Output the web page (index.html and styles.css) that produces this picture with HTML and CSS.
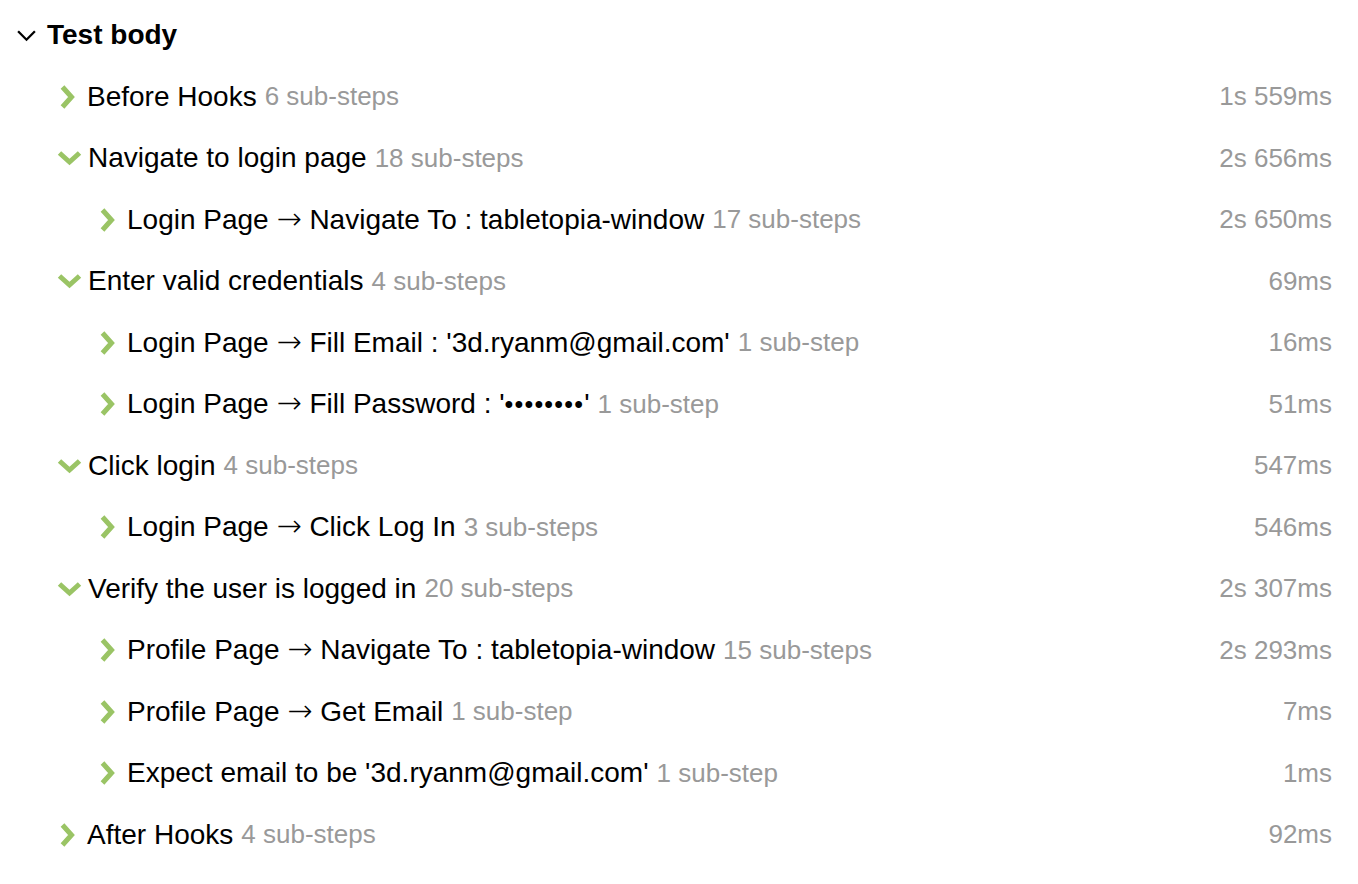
FILE: index.html
```html
<!DOCTYPE html>
<html>
<head>
<meta charset="utf-8">
<link rel="stylesheet" href="styles.css">
</head>
<body>
<div class="tree">
  <div class="header">
    <svg class="hchev" viewBox="0 0 20 12"><path d="M2 2 L10 10 L18 2" fill="none" stroke="#000" stroke-width="2.2"/></svg>
    <span class="htitle">Test body</span>
  </div>
  <div class="row l1"><svg class="cr" viewBox="0 0 16 24"><path d="M3 2 L12 12 L3 22" fill="none" stroke="#9ac465" stroke-width="5"/></svg><span class="name">Before Hooks</span><span class="sub">6 sub-steps</span><span class="dur">1s 559ms</span></div>
  <div class="row l1"><svg class="cd" viewBox="0 0 24 16"><path d="M2 3 L12 12 L22 3" fill="none" stroke="#9ac465" stroke-width="5"/></svg><span class="name">Navigate to login page</span><span class="sub">18 sub-steps</span><span class="dur">2s 656ms</span></div>
  <div class="row l2"><svg class="cr" viewBox="0 0 16 24"><path d="M3 2 L12 12 L3 22" fill="none" stroke="#9ac465" stroke-width="5"/></svg><span class="name">Login Page <span class="arr">→</span> Navigate To : tabletopia-window</span><span class="sub">17 sub-steps</span><span class="dur">2s 650ms</span></div>
  <div class="row l1"><svg class="cd" viewBox="0 0 24 16"><path d="M2 3 L12 12 L22 3" fill="none" stroke="#9ac465" stroke-width="5"/></svg><span class="name">Enter valid credentials</span><span class="sub">4 sub-steps</span><span class="dur">69ms</span></div>
  <div class="row l2"><svg class="cr" viewBox="0 0 16 24"><path d="M3 2 L12 12 L3 22" fill="none" stroke="#9ac465" stroke-width="5"/></svg><span class="name">Login Page <span class="arr">→</span> Fill Email : '3d.ryanm@gmail.com'</span><span class="sub">1 sub-step</span><span class="dur">16ms</span></div>
  <div class="row l2"><svg class="cr" viewBox="0 0 16 24"><path d="M3 2 L12 12 L3 22" fill="none" stroke="#9ac465" stroke-width="5"/></svg><span class="name">Login Page <span class="arr">→</span> Fill Password : '<span class="dots">••••••••</span>'</span><span class="sub">1 sub-step</span><span class="dur">51ms</span></div>
  <div class="row l1"><svg class="cd" viewBox="0 0 24 16"><path d="M2 3 L12 12 L22 3" fill="none" stroke="#9ac465" stroke-width="5"/></svg><span class="name">Click login</span><span class="sub">4 sub-steps</span><span class="dur">547ms</span></div>
  <div class="row l2"><svg class="cr" viewBox="0 0 16 24"><path d="M3 2 L12 12 L3 22" fill="none" stroke="#9ac465" stroke-width="5"/></svg><span class="name">Login Page <span class="arr">→</span> Click Log In</span><span class="sub">3 sub-steps</span><span class="dur">546ms</span></div>
  <div class="row l1"><svg class="cd" viewBox="0 0 24 16"><path d="M2 3 L12 12 L22 3" fill="none" stroke="#9ac465" stroke-width="5"/></svg><span class="name">Verify the user is logged in</span><span class="sub">20 sub-steps</span><span class="dur">2s 307ms</span></div>
  <div class="row l2"><svg class="cr" viewBox="0 0 16 24"><path d="M3 2 L12 12 L3 22" fill="none" stroke="#9ac465" stroke-width="5"/></svg><span class="name">Profile Page <span class="arr">→</span> Navigate To : tabletopia-window</span><span class="sub">15 sub-steps</span><span class="dur">2s 293ms</span></div>
  <div class="row l2"><svg class="cr" viewBox="0 0 16 24"><path d="M3 2 L12 12 L3 22" fill="none" stroke="#9ac465" stroke-width="5"/></svg><span class="name">Profile Page <span class="arr">→</span> Get Email</span><span class="sub">1 sub-step</span><span class="dur">7ms</span></div>
  <div class="row l2"><svg class="cr" viewBox="0 0 16 24"><path d="M3 2 L12 12 L3 22" fill="none" stroke="#9ac465" stroke-width="5"/></svg><span class="name">Expect email to be '3d.ryanm@gmail.com'</span><span class="sub">1 sub-step</span><span class="dur">1ms</span></div>
  <div class="row l1"><svg class="cr" viewBox="0 0 16 24"><path d="M3 2 L12 12 L3 22" fill="none" stroke="#9ac465" stroke-width="5"/></svg><span class="name">After Hooks</span><span class="sub">4 sub-steps</span><span class="dur">92ms</span></div>
</div>
</body>
</html>
```
FILE: styles.css
```css
html, body {
  margin: 0;
  padding: 0;
  background: #fff;
}
body {
  font-family: "Liberation Sans", Arial, sans-serif;
  font-size: 28px;
  color: #000;
}
.tree {
  padding: 4px 26px 0 16px;
}
.header {
  display: flex;
  align-items: center;
  height: 62px;
}
.hchev {
  width: 21px;
  height: 13px;
  margin-right: 10px;
}
.htitle {
  font-weight: bold;
}
.row {
  display: flex;
  align-items: center;
  height: 61.5px;
  white-space: nowrap;
}
.l1 { padding-left: 42px; }
.l2 { padding-left: 82px; }
.cr {
  width: 17px;
  height: 24px;
  margin-left: 1px;
  margin-right: 11px;
}
.cd {
  width: 25px;
  height: 16px;
  margin-left: -1px;
  margin-right: 6px;
}
.arr {
  font-family: "DejaVu Sans", sans-serif;
  font-weight: 200;
  font-size: 30px;
  line-height: 1;
}
.dots {
  font-size: 25px;
  letter-spacing: 1.2px;
}
.sub {
  font-size: 26px;
  color: #999;
  margin-left: 8px;
}
.dur {
  font-size: 26px;
  margin-left: auto;
  color: #999;
}
```
